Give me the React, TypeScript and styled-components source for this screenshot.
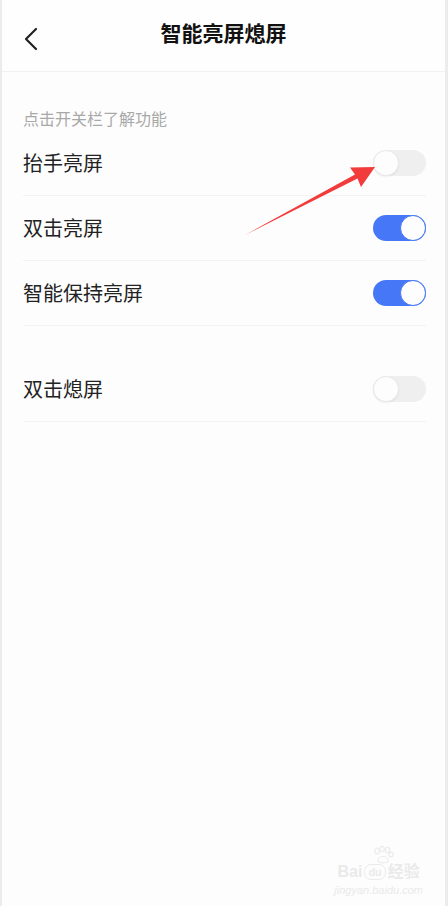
import React from "react";
import styled, { createGlobalStyle } from "styled-components";

const GlobalStyle = createGlobalStyle`
  html, body {
    margin: 0;
    padding: 0;
    background: #fdfdfd;
  }
  * {
    box-sizing: border-box;
  }
`;

type Item = { label: string; on: boolean };

const groups: Item[][] = [
  [
    { label: "抬手亮屏", on: false },
    { label: "双击亮屏", on: true },
    { label: "智能保持亮屏", on: true },
  ],
  [{ label: "双击熄屏", on: false }],
];

const App: React.FC = () => {
  return (
    <StyledPage>
      <GlobalStyle />
      <Header>
        <BackButton aria-label="back">
          <svg width="16" height="24" viewBox="0 0 16 24">
            <path
              d="M13 2 L3 12 L13 22"
              fill="none"
              stroke="#222"
              strokeWidth="2.2"
              strokeLinecap="round"
              strokeLinejoin="round"
            />
          </svg>
        </BackButton>
        <Title>智能亮屏熄屏</Title>
      </Header>

      <Content>
        <SectionLabel>点击开关栏了解功能</SectionLabel>
        {groups.map((group, gi) => (
          <Group key={gi} $spaced={gi > 0}>
            {group.map((item) => (
              <Row key={item.label}>
                <RowLabel>{item.label}</RowLabel>
                <Switch $on={item.on}>
                  <Knob $on={item.on} />
                </Switch>
              </Row>
            ))}
          </Group>
        ))}
      </Content>

      <Arrow viewBox="0 0 448 906" width="448" height="906">
        <polygon
          points="245,235 355,174.5 350,167.5 375,167 361,187 357.5,178.5"
          fill="#f23c3c"
        />
      </Arrow>

      <Watermark>
        <Paw width="22" height="18" viewBox="0 0 22 18">
          <g fill="none" stroke="#ebebeb" strokeWidth="1.2">
            <ellipse cx="5" cy="5" rx="2.2" ry="2.8" />
            <ellipse cx="10" cy="3" rx="2.2" ry="2.6" />
            <ellipse cx="15.5" cy="4" rx="2.2" ry="2.6" />
            <ellipse cx="19" cy="8.5" rx="2" ry="2.4" />
            <path d="M6 15 C6 9 16 9 16 15 C16 17.5 6 17.5 6 15 Z" />
          </g>
        </Paw>
        <BrandLine>
          <Brand>Bai</Brand>
          <BrandDu>du</BrandDu>
          <Brand>经验</Brand>
        </BrandLine>
        <BrandUrl>jingyan.baidu.com</BrandUrl>
      </Watermark>
    </StyledPage>
  );
};

export default App;

const StyledPage = styled.div`
  position: relative;
  width: 448px;
  min-height: 906px;
  background: #fdfdfd;
  border-left: 2px solid #ececec;
  border-right: 3px solid #ececec;
  font-family: "Noto Sans CJK SC", "Noto Sans", sans-serif;
  color: #222;
  overflow: hidden;
`;

const Header = styled.div`
  position: relative;
  height: 72px;
  display: flex;
  align-items: center;
  justify-content: center;
  border-bottom: 1px solid #f1f1f1;
  background: #fefefe;
  padding-bottom: 8px;
`;

const BackButton = styled.div`
  position: absolute;
  left: 21px;
  top: 27px;
  display: flex;
`;

const Title = styled.div`
  font-size: 21px;
  font-weight: 700;
  color: #111;
`;

const Content = styled.div`
  padding: 0 19px 0 21px;
`;

const SectionLabel = styled.div`
  padding-top: 35px;
  height: 59px;
  font-size: 16px;
  line-height: 22px;
  color: #a8a8a8;
`;

const Group = styled.div<{ $spaced: boolean }>`
  margin-top: ${(p) => (p.$spaced ? "31px" : "0")};
`;

const Row = styled.div`
  height: 65px;
  display: flex;
  align-items: center;
  justify-content: space-between;
  border-bottom: 1px solid #f2f2f2;
  padding-bottom: 1px;
`;

const RowLabel = styled.span`
  font-size: 20px;
  color: #222;
`;

const Switch = styled.div<{ $on: boolean }>`
  width: 53px;
  height: 26px;
  border-radius: 13px;
  background: ${(p) => (p.$on ? "#4677f6" : "#efefef")};
  display: flex;
  justify-content: ${(p) => (p.$on ? "flex-end" : "flex-start")};
`;

const Knob = styled.div<{ $on: boolean }>`
  width: 26px;
  height: 26px;
  border-radius: 50%;
  background: #fdfdfd;
  border: ${(p) => (p.$on ? "1.5px solid #4677f6" : "1px solid #eaeaea")};
  box-shadow: ${(p) => (p.$on ? "none" : "0 1px 2px rgba(0,0,0,0.06)")};
`;

const Arrow = styled.svg`
  position: absolute;
  left: -2px;
  top: 0;
  pointer-events: none;
`;

const Watermark = styled.div`
  position: absolute;
  right: 22px;
  bottom: 9px;
  display: flex;
  flex-direction: column;
  align-items: center;
  color: #eaeaea;
`;

const Paw = styled.svg`
  margin-left: 8px;
  margin-bottom: -1px;
`;

const BrandLine = styled.div`
  display: flex;
  align-items: center;
  gap: 2px;
`;

const Brand = styled.span`
  font-family: "Liberation Sans", "Noto Sans CJK SC", sans-serif;
  font-size: 16px;
  font-weight: 700;
  line-height: 17px;
`;

const BrandDu = styled.span`
  font-family: "Liberation Sans", sans-serif;
  font-size: 11px;
  font-weight: 700;
  line-height: 14px;
  padding: 0 3px;
  border: 1px solid #ebebeb;
  border-radius: 7px;
`;

const BrandUrl = styled.div`
  font-family: "Liberation Sans", sans-serif;
  font-style: italic;
  font-size: 11px;
  line-height: 14px;
  margin-top: 3px;
`;
